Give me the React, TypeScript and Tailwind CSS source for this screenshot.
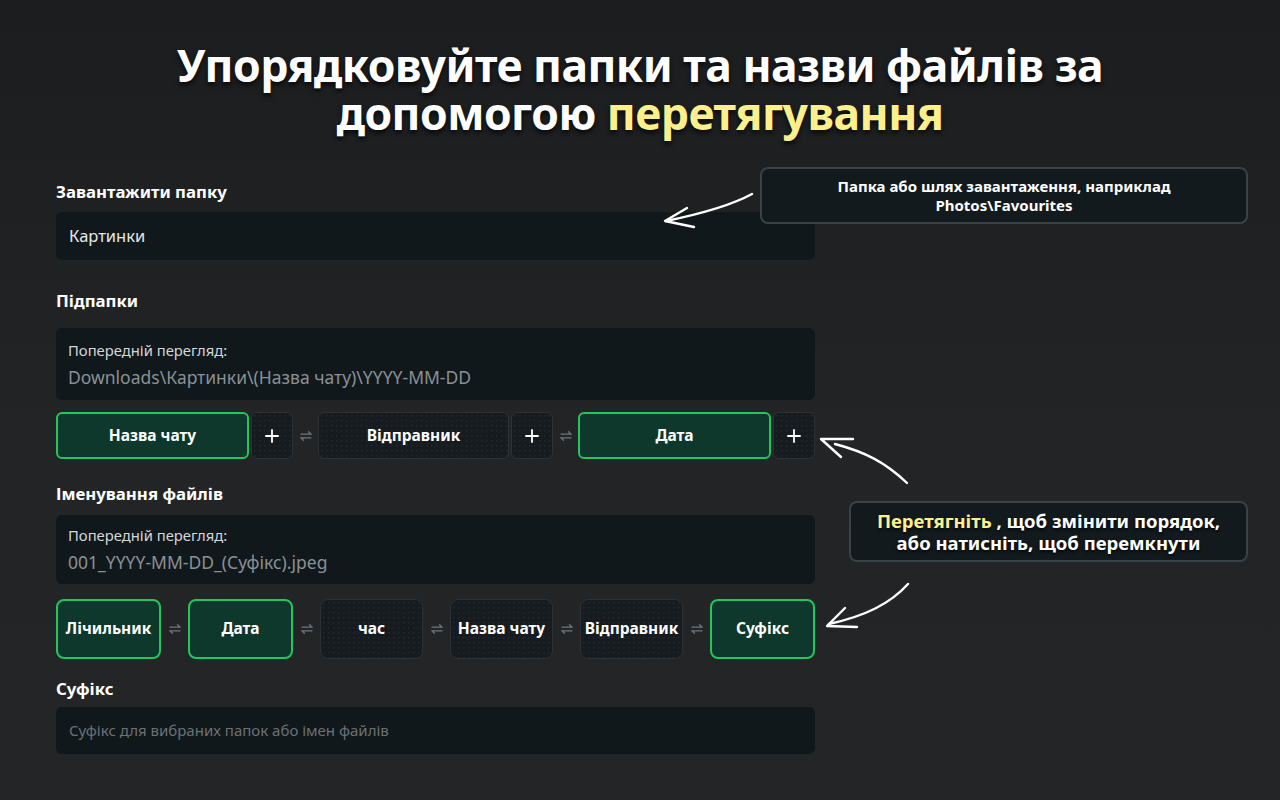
import React from 'react';

const font = { fontFamily: '"Noto Sans", "Open Sans", sans-serif' };

const SwapIcon = () => (
	<svg width="12" height="12" viewBox="0 0 12 12" fill="none" stroke="#6f7579" strokeWidth="1.3" strokeLinecap="round">
		<path d="M1 4.2h10L8.6 1.8" />
		<path d="M11 7.8H1l2.4 2.4" />
	</svg>
);

const Swap = ({ w }: { w: string }) => (
	<span className={`flex shrink-0 items-center justify-center ${w}`}>
		<SwapIcon />
	</span>
);

const dots =
	'bg-[radial-gradient(rgba(255,255,255,0.045)_1px,transparent_1px)] bg-size-[5px_5px]';

interface ChipProps {
	label: string;
	active?: boolean;
	tall?: boolean;
}

const Chip = ({ label, active, tall }: ChipProps) => (
	<div
		className={`flex flex-1 items-center justify-center text-[15.5px] font-bold text-white ${
			tall ? 'h-[60px] rounded-lg' : 'h-[47px] rounded-md'
		} ${
			active
				? 'border-2 border-[#22c55e] bg-[#0e382b]'
				: `border border-[#2c3236] bg-[#151b1f] ${dots}`
		}`}
	>
		{label}
	</div>
);

const PlusButton = () => (
	<div
		className={`flex h-[47px] w-[42px] shrink-0 items-center justify-center rounded-md border border-[#2c3236] bg-[#151b1f] ${dots}`}
	>
		<svg width="14" height="14" viewBox="0 0 14 14" stroke="white" strokeWidth="1.8" strokeLinecap="round">
			<path d="M7 1v12M1 7h12" />
		</svg>
	</div>
);

const Label = ({ children, className }: { children: React.ReactNode; className: string }) => (
	<div className={`text-[16.8px] leading-6 font-bold text-white ${className}`}>{children}</div>
);

const Preview = ({ value, h }: { value: string; h: string }) => (
	<div className={`flex flex-col justify-center rounded-md bg-[#10181c] px-3 ${h}`}>
		<div className="text-[14.8px] leading-5 text-[#d4d6d8]">Попередній перегляд:</div>
		<div className="mt-[5px] text-[17.5px] leading-6 text-[#8b9094]">{value}</div>
	</div>
);

const Callout = ({ children, className }: { children: React.ReactNode; className: string }) => (
	<div
		className={`absolute flex flex-col items-center justify-center rounded-lg border-2 border-[#394246] bg-[#121a1e] text-center font-bold text-white ${className}`}
	>
		{children}
	</div>
);

export default function App() {
	return (
		<div
			className="relative h-[800px] w-[1280px] overflow-hidden bg-[linear-gradient(180deg,#1c1d1f_0%,#222426_55%,#232527_100%)]"
			style={font}
		>
			<h1 className="pt-[41px] text-center text-[44.5px] leading-[48px] font-bold tracking-[-0.5px] text-white [text-shadow:0_3px_5px_rgba(0,0,0,0.75)]">
				<div>Упорядковуйте папки та назви файлів за</div>
				<div>
					допомогою <span className="text-[#fdf08c]">перетягування</span>
				</div>
			</h1>

			<div className="ml-[56px] w-[759px]">
				<Label className="mt-[43px]">Завантажити папку</Label>
				<div className="mt-[8px] flex h-[48px] items-center rounded-md bg-[#10181c] px-[13px] text-[16.5px] text-[#e6e7e8]">
					Картинки
				</div>

				<Label className="mt-[29px]">Підпапки</Label>
				<div className="mt-[15px]">
					<Preview h="h-[72px]" value="Downloads\Картинки\(Назва чату)\YYYY-MM-DD" />
				</div>
				<div className="mt-[12px] flex items-center">
					<Chip label="Назва чату" active />
					<span className="w-[2px]" />
					<PlusButton />
					<Swap w="w-[25px]" />
					<Chip label="Відправник" />
					<span className="w-[2px]" />
					<PlusButton />
					<Swap w="w-[25px]" />
					<Chip label="Дата" active />
					<span className="w-[2px]" />
					<PlusButton />
				</div>

				<Label className="mt-[23px]">Іменування файлів</Label>
				<div className="mt-[9px]">
					<Preview h="h-[69px]" value="001_YYYY-MM-DD_(Суфікс).jpeg" />
				</div>
				<div className="mt-[15px] flex items-center">
					<Chip label="Лічильник" active tall />
					<Swap w="w-[27px]" />
					<Chip label="Дата" active tall />
					<Swap w="w-[27px]" />
					<Chip label="час" tall />
					<Swap w="w-[27px]" />
					<Chip label="Назва чату" tall />
					<Swap w="w-[27px]" />
					<Chip label="Відправник" tall />
					<Swap w="w-[27px]" />
					<Chip label="Суфікс" active tall />
				</div>

				<Label className="mt-[18px]">Суфікс</Label>
				<div className="mt-[6px] flex h-[47px] items-center rounded-md bg-[#10181c] px-[13px] text-[15px] text-[#6c7175]">
					Суфікс для вибраних папок або імен файлів
				</div>
			</div>

			<Callout className="left-[760px] top-[167px] h-[57px] w-[488px] text-[15px] leading-[19px]">
				<span>Папка або шлях завантаження, наприклад</span>
				<span>Photos\Favourites</span>
			</Callout>

			<Callout className="left-[849px] top-[501px] h-[61px] w-[399px] text-[18.5px] leading-[22px] [text-shadow:0_2px_3px_rgba(0,0,0,0.7)]">
				<span>
					<span className="text-[#fdf08c]">Перетягніть</span> , щоб змінити порядок,
				</span>
				<span>або натисніть, щоб перемкнути</span>
			</Callout>

			<svg
				className="pointer-events-none absolute left-0 top-0"
				width="1280"
				height="800"
				fill="none"
				stroke="white"
				strokeWidth="2.4"
				strokeLinecap="round"
				strokeLinejoin="round"
			>
				<path d="M752 194 C730 206 700 214 666 221" />
				<path d="M687 208 L665 221 L694 227" />
				<path d="M907 483 C885 462 865 452 835 444" />
				<path d="M853 439 L821 439 L841 457" />
				<path d="M908 584 C890 604 865 616 829 624" />
				<path d="M845 608 L827 626 L857 627" />
			</svg>
		</div>
	);
}
